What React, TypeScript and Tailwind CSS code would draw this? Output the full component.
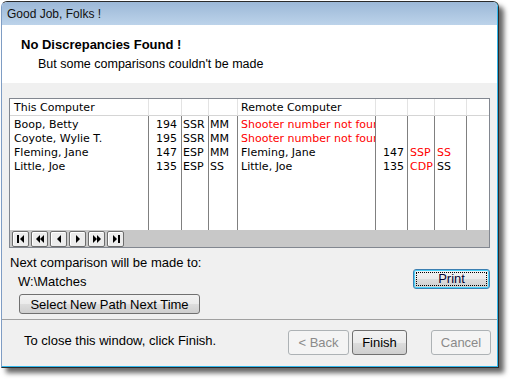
const ui = "font-['Liberation_Sans',Arial,sans-serif]";
const gridFont = "font-['DejaVu_Sans',Verdana,sans-serif]";

type Cell = { t: string; red?: boolean };

const columns = [
  { w: "w-[139px]", head: "This Computer", cell: "pl-[4px]" },
  { w: "w-[33px]", head: "", cell: "pr-[4px] text-right" },
  { w: "w-[27px]", head: "", cell: "pl-[1px]" },
  { w: "w-[29px]", head: "", cell: "pl-[1px]" },
  { w: "w-[138px]", head: "Remote Computer", cell: "pl-[3px]" },
  { w: "w-[32px]", head: "", cell: "pr-[3px] text-right" },
  { w: "w-[27px]", head: "", cell: "pl-[2px]" },
  { w: "w-[32px]", head: "", cell: "pl-[2px]" },
  { w: "w-[22px]", head: "", cell: "" },
];

const rows: Cell[][] = [
  [{ t: "Boop, Betty" }, { t: "194" }, { t: "SSR" }, { t: "MM" }, { t: "Shooter number not found", red: true }, { t: "" }, { t: "" }, { t: "" }, { t: "" }],
  [{ t: "Coyote, Wylie T." }, { t: "195" }, { t: "SSR" }, { t: "MM" }, { t: "Shooter number not found", red: true }, { t: "" }, { t: "" }, { t: "" }, { t: "" }],
  [{ t: "Fleming, Jane" }, { t: "147" }, { t: "ESP" }, { t: "MM" }, { t: "Fleming, Jane" }, { t: "147" }, { t: "SSP", red: true }, { t: "SS", red: true }, { t: "" }],
  [{ t: "Little, Joe" }, { t: "135" }, { t: "ESP" }, { t: "SS" }, { t: "Little, Joe" }, { t: "135" }, { t: "CDP", red: true }, { t: "SS" }, { t: "" }],
];

// record navigator glyphs
const NavIcon = ({ kind }: { kind: string }) => {
  const left = (x: number) => <polygon points={`${x + 4},0 ${x + 4},8 ${x},4`} />;
  const right = (x: number) => <polygon points={`${x},0 ${x},8 ${x + 4},4`} />;
  return (
    <svg width="10" height="8" viewBox="0 0 10 8" fill="black">
      {kind === "first" && (
        <>
          <rect x="1" y="0" width="2" height="8" />
          {left(4)}
        </>
      )}
      {kind === "prevPage" && (
        <>
          {left(1)}
          {left(5)}
        </>
      )}
      {kind === "prev" && left(3)}
      {kind === "next" && right(3)}
      {kind === "nextPage" && (
        <>
          {right(1)}
          {right(5)}
        </>
      )}
      {kind === "last" && (
        <>
          {right(2)}
          <rect x="7" y="0" width="2" height="8" />
        </>
      )}
    </svg>
  );
};

const face = "bg-[linear-gradient(#f2f2f2_0%,#ebebeb_50%,#dddddd_50%,#cfcfcf_100%)]";
const btn = `flex items-center justify-center rounded-[3px] border border-[#707070] ${face} text-[13px] text-black`;
const btnOff =
  "flex items-center justify-center rounded-[3px] border border-[#adb2b5] bg-[#f4f4f4] text-[13px] text-[#8a8a8a]";

export default function App() {
  return (
    <div className={`h-[383px] w-[513px] bg-white pl-[1px] pt-[1px] ${ui}`}>
      <div className="h-[367px] w-[498px] rounded-t-[6px] border border-[#2a2a2a] border-l-[#7f9dc4] shadow-[5px_5px_5px_rgba(0,0,0,0.6)]">
        <div className="flex h-full flex-col overflow-hidden rounded-t-[5px] border-b border-r border-[#33b8ec]">
          <div className="flex h-[23px] items-center bg-[linear-gradient(#9cb8d7,#bcd3ea)] pl-[5px] text-[12px] text-[#111]">
            Good Job, Folks !
          </div>

          <div className="h-[58px] bg-white pl-[19px] pt-[12px]">
            <div className="text-[13px] font-bold leading-[16px] text-black">No Discrepancies Found !</div>
            <div className="mt-[3px] pl-[17px] text-[12.5px] leading-[16px] text-black">
              But some comparisons couldn't be made
            </div>
          </div>

          <div className="h-[237px] border-b border-[#a0a0a0] bg-[#f0f0f0] px-[7px] pt-[15px]">
            <div className={`flex h-[150px] w-[481px] flex-col border border-[#828790] bg-white ${gridFont} text-[11px]`}>
              <div className="flex h-[131px]">
                {columns.map((c, ci) => (
                  <div key={ci} className={`flex shrink-0 flex-col ${c.w}`}>
                    <div
                      className={`flex h-[17px] items-center overflow-hidden whitespace-nowrap border-b border-[#d5d5d5] pt-[2px] ${
                        ci < 8 ? "border-r border-r-[#e3e3e3]" : ""
                      } ${c.cell}`}
                    >
                      {c.head}
                    </div>
                    <div className={`flex-1 pt-[2px] ${ci < 8 ? "border-r border-[#808080]" : ""}`}>
                      {rows.map((r, ri) => (
                        <div
                          key={ri}
                          className={`h-[14px] overflow-hidden whitespace-nowrap leading-[14px] ${c.cell} ${
                            r[ci].red ? "text-[#ff0000]" : "text-black"
                          }`}
                        >
                          {r[ci].t}
                        </div>
                      ))}
                    </div>
                  </div>
                ))}
              </div>
              <div className="flex h-[17px] items-center gap-[2px] bg-[#c8c8c8] pl-[2px]">
                {["first", "prevPage", "prev", "next", "nextPage", "last"].map((k) => (
                  <div
                    key={k}
                    className="flex h-[16px] w-[17px] items-center justify-center rounded-[2px] border border-[#6d6d6d] bg-[#ececec] shadow-[inset_1px_1px_0_#ffffff]"
                  >
                    <NavIcon kind={k} />
                  </div>
                ))}
              </div>
            </div>

            <div className="flex justify-between">
              <div className="pl-[1px] pt-[7px] text-[13px] leading-[15px] text-black">
                <div>Next comparison will be made to:</div>
                <div className="mt-[4px] pl-[8px]">W:\Matches</div>
                <div className={`${btn} ml-[9px] mt-[5px] h-[20px] w-[181px]`}>Select New Path Next Time</div>
              </div>
              <div
                className={`mt-[21px] flex h-[20px] w-[77px] items-center justify-center rounded-[3px] border border-[#3c7fb1] ${face} p-[2px] shadow-[inset_0_0_0_1px_#48d2fb]`}
              >
                <div className="flex h-full w-full items-center justify-center border border-dotted border-black text-[13px] text-[#000033]">
                  Print
                </div>
              </div>
            </div>
          </div>

          <div className="flex flex-1 items-start justify-between bg-[#f0f0f0] pr-[6px]">
            <div className="pl-[22px] pt-[13px] text-[13px] leading-[15px] text-black">To close this window, click Finish.</div>
            <div className="mt-[10px] flex">
              <div className={`${btnOff} h-[25px] w-[61px]`}>&lt; Back</div>
              <div className={`${btn} ml-[3px] h-[25px] w-[55px]`}>Finish</div>
              <div className={`${btnOff} ml-[24px] h-[25px] w-[60px]`}>Cancel</div>
            </div>
          </div>
        </div>
      </div>
    </div>
  );
}
